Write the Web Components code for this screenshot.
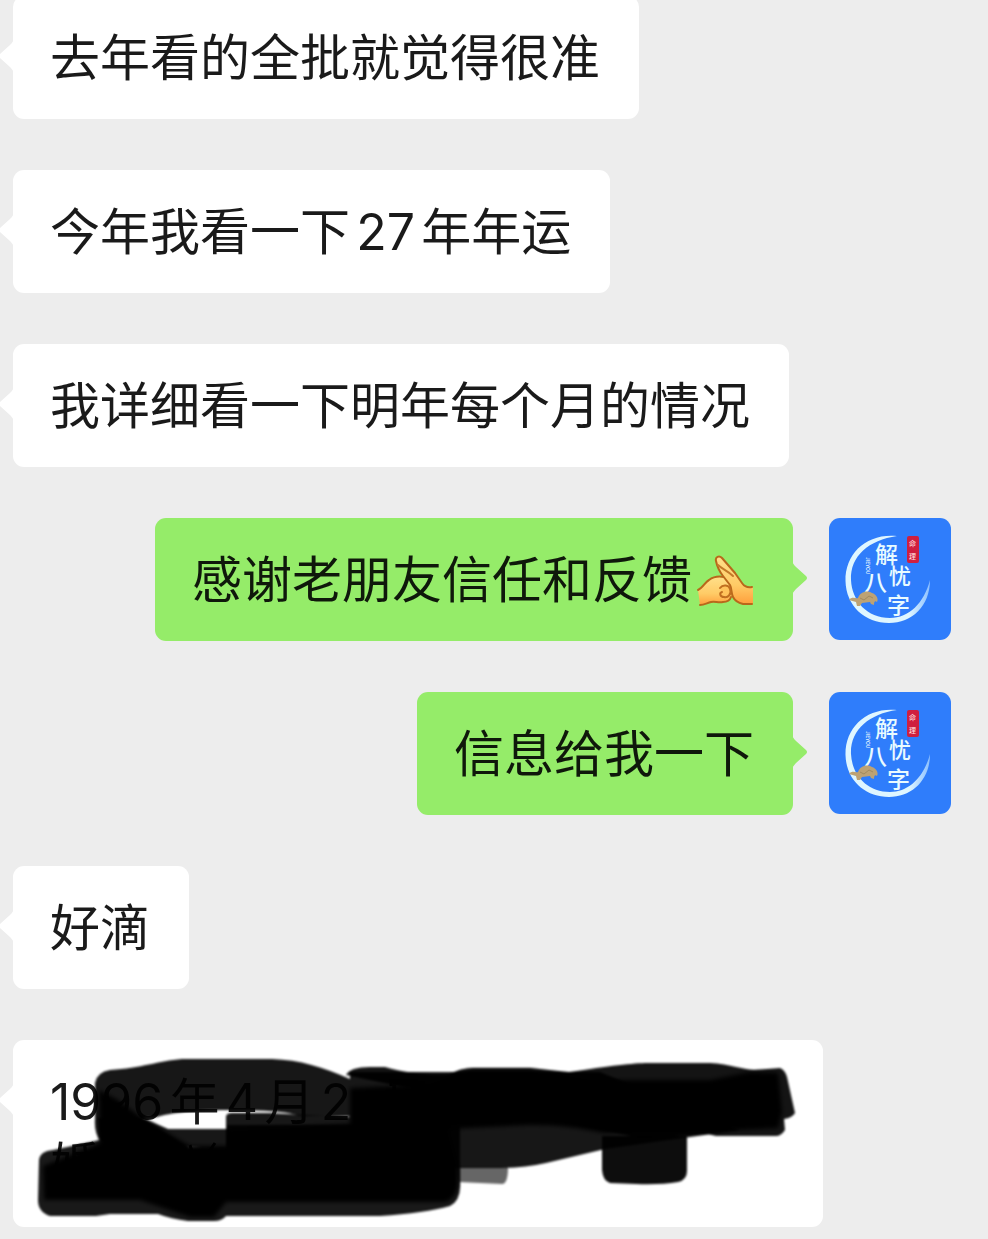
<!DOCTYPE html>
<html lang="zh-CN">
<head>
    <title>聊天记录</title>
    <meta charset="utf-8">
    <meta name="viewport" content="width=device-width, initial-scale=1">
    <style>
        body {
            margin: 0;
            background: #ededed;
            color: #1a1a1a;
            font: 50px/64px Inter, "Noto Sans CJK SC", sans-serif;
            overflow: hidden;
        }
    </style>
</head>
<body>

<template id="chat-list">
    <style>
        :host {
            display: flex;
            flex-direction: column;
            gap: 51px;
            /* scrolled a little past the first bubble */
            margin-top: -4px;
            padding: 0 37px 12px 13px;
        }
    </style>
    <slot></slot>
</template>

<template id="chat-message">
    <style>
        :host {
            --bubble: #fff;
            display: flex;
            align-items: flex-start;
            gap: 36px;
        }

        :host([mine]) {
            --bubble: #95ec69;
            justify-content: flex-end;
            color: #0f180b;
        }

        .bubble {
            position: relative;
            padding: 30px 39px 29px 37px;
            border-radius: 11px;
            background: var(--bubble);
            text-autospace: normal;
        }

        .tail {
            position: absolute;
            top: 43px;
            right: 100%;
            width: 15px;
            height: 34px;
            fill: var(--bubble);
        }

        :host([mine]) .tail {
            right: auto;
            left: 100%;
            transform: scaleX(-1);
        }
    </style>
    <div class="bubble">
        <svg class="tail" viewBox="0 0 15 34" aria-hidden="true"><path d="M16 0Q15 3 12 6L2 15Q0 17 2 19L12 28Q15 31 16 34Z"/></svg>
        <slot></slot>
    </div>
    <slot name="avatar"></slot>
</template>

<template id="chat-avatar">
    <style>
        :host {
            display: block;
            flex: none;
            width: 122px;
            height: 122px;
            border-radius: 11px;
            background: #2f7dfb;
            overflow: hidden;
        }

        svg {
            display: block;
        }

        text {
            font-family: "Noto Sans CJK SC", sans-serif;
            font-weight: 500;
            fill: #e9fbff;
        }

        .seal {
            font-size: 7px;
            fill: #ffd9d9;
        }
    </style>
    <svg width="122" height="122" viewBox="0 0 122 122" role="img" aria-label="解忧八字">
        <defs>
            <linearGradient id="brush" x1="0" y1="0" x2="1" y2="0">
                <stop offset="0" stop-color="#dff6ff"/>
                <stop offset=".75" stop-color="#dff6ff"/>
                <stop offset="1" stop-color="#8cc0ff"/>
            </linearGradient>
        </defs>
        <path fill="url(#brush)" d="M68 18C38 15 16 35 16.500 63C17 88 36 105 60 105C83 105 101 88 101 62C95 85 80 100 61 100C38 100 23 83 22 62C21 38 40 22 68 18Z"/>
        <rect x="78" y="18" width="12" height="27" rx="2" fill="#cf1f3f"/>
        <text class="seal" x="80" y="28">命</text>
        <text class="seal" x="80" y="41">理</text>
        <text x="46" y="45" font-size="23">解</text>
        <text x="60" y="66" font-size="22">忧</text>
        <text x="35" y="73" font-size="23">八</text>
        <text x="58" y="96" font-size="23">字</text>
        <text transform="translate(37 39) rotate(90)" font-size="5">JIEYOU</text>
        <path fill="#bda274" d="M20 82C23 78 27 81 29 80C31 74 38 72 43 75C47 76 50 81 48 84C46 82 45 84 45 87L42 86L41 84L33 85L31 88L28 88L27 84Z"/>
        <path fill="none" stroke="#a08a60" d="M31 80L35 82L40 78L44 80"/>
    </svg>
</template>

<template id="palms-emoji">
    <style>
        :host {
            display: inline-block;
            width: 62px;
            height: 52px;
            vertical-align: -9px;
        }

        svg {
            display: block;
        }
    </style>
    <svg width="62" height="52" viewBox="-5 -1 62 52" role="img" aria-label="双手">
        <defs>
            <linearGradient id="skin" x1="0" y1="0" x2="0" y2="1">
                <stop offset="0" stop-color="#ffe08a"/>
                <stop offset=".6" stop-color="#ffcb66"/>
                <stop offset="1" stop-color="#ff9f3c"/>
            </linearGradient>
        </defs>
        <g stroke-linecap="round" stroke-linejoin="round">
            <path fill="url(#skin)" d="M1 34C6 32 8 26 12 24C16 21 22 20 27 21L36 32L35 40C33 45 30 46 26 46C21 47 18 45 14 46C10 47 7 49 3 49Z"/>
            <path fill="none" stroke="#b9681b" stroke-width="2" d="M1 34C6 32 8 26 12 24C16 21 22 20 27 21M3 49C7 49 10 47 14 46C18 45 21 47 26 46C30 46 33 44 34 41"/>
            <path fill="url(#skin)" d="M56 31C50 32 47 30 45 27L38 17L25 2C22-1 18 1 19 5C20 10 22 15 26 20L33 29C35 33 34 37 36 41C38 45 42 47 46 48L56 48Z"/>
            <path fill="none" stroke="#b9681b" stroke-width="2" d="M55 31C50 32 47 30 45 27L38 17L25 2C22-1 18 1 19 5C20 10 22 15 26 20L33 29C35 33 34 37 36 41C38 45 42 47 46 48H55"/>
            <path fill="none" stroke="#c47a29" stroke-width="2" d="M21 9C25 13 31 15 36 20"/>
            <path fill="#ffc45c" stroke="#c06f20" stroke-width="2" d="M23 32C26 28 32 29 33 33C35 38 31 42 27 41C23 41 22 37 25 36"/>
        </g>
    </svg>
</template>

<template id="marked-out">
    <style>
        /* text and marker strokes share one grid cell */
        :host {
            display: grid;
        }

        .text,
        svg {
            grid-area: 1 / 1;
        }

        svg {
            display: block;
            overflow: visible;
        }
    </style>
    <div class="text"><slot></slot></div>
    <svg width="734" height="128" viewBox="50 1070 734 128" aria-hidden="true">
        <defs>
            <filter id="soft" x="-5%" y="-10%" width="110%" height="120%">
                <feGaussianBlur stdDeviation="1.300"/>
            </filter>
            <filter id="softer" x="-5%" y="-10%" width="110%" height="120%">
                <feGaussianBlur stdDeviation="2"/>
            </filter>
        </defs>
        <g filter="url(#soft)">
            <!-- single passes of the marker, text still shows through -->
            <path opacity=".91" d="M95 1083Q97 1072 110 1070C142 1068 158 1061 182 1059H272C300 1060 323 1067 350 1079V1116H300C285 1110 250 1110 226 1110C195 1110 170 1113 157 1117L142 1118L168 1129H230V1150L101 1141Q94 1134 95 1119Z"/>
            <path opacity=".91" d="M226 1117Q226 1113 232 1113H270Q300 1115 350 1117V1072H600L740 1130L605 1149L546 1163Q524 1168 500 1168H226Z"/>
            <path opacity=".92" d="M346 1075Q350 1067 370 1067H385C405 1073 428 1075 450 1074Q460 1068 473 1068H530L569 1072C610 1066 633 1063 648 1063H710C730 1064 745 1070 754 1070L780 1068Q785 1070 787 1077L795 1113Q792 1118 784 1119L785 1130Q781 1136 776 1136H716L708 1134L640 1138L604 1130Z"/>
            <path opacity=".9" d="M39 1160Q40 1151 53 1150L100 1140L98 1118L142 1118L157 1128L188 1148H227V1125H460V1186Q460 1201 450 1206Q425 1213 380 1216H226Q222 1221 214 1221H188Q171 1219 158 1214H110L96 1216H50Q38 1212 38 1200Z"/>
            <path opacity=".6" d="M456 1167H508Q508 1184 502 1184L458 1182Z"/>
            <path opacity=".95" d="M602 1136H687V1171Q687 1180 678 1182Q660 1185 636 1184L610 1183Q603 1181 602 1170Z"/>
        </g>
        <g filter="url(#softer)">
            <!-- overlapping passes, fully black -->
            <path d="M99 1090L118 1100L142 1118L190 1146H229V1130L350 1124V1088L430 1084L470 1070H530L590 1080H710L750 1072L778 1073L782 1112L778 1128L716 1131L604 1133C580 1128 560 1125 530 1125L448 1129L458 1168V1186Q456 1198 446 1202H226L214 1217H190L140 1200H44L43 1166L100 1143Z"/>
        </g>
        <path fill="none" stroke="#000" stroke-width="3" d="M190 1145L192 1152M215 1143L208 1153M391 1086V1081H418"/>
    </svg>
</template>

<chat-list>
    <chat-message>去年看的全批就觉得很准</chat-message>
    <chat-message>今年我看一下27年年运</chat-message>
    <chat-message>我详细看一下明年每个月的情况</chat-message>
    <chat-message mine>感谢老朋友信任和反馈<palms-emoji></palms-emoji><chat-avatar slot="avatar"></chat-avatar></chat-message>
    <chat-message mine>信息给我一下<chat-avatar slot="avatar"></chat-avatar></chat-message>
    <chat-message>好滴</chat-message>
    <chat-message><marked-out>1996年4月2&#8199;日<br>婚</marked-out></chat-message>
</chat-list>

<script>
    // every element here is its template plus slots
    const define = name => {
        customElements.define(name, class extends HTMLElement {
            constructor() {
                super()
                const template = document.getElementById(name)
                this.attachShadow({mode: 'open'}).appendChild(template.content.cloneNode(true))
            }
        })
    }

    define('chat-list')
    define('chat-message')
    define('chat-avatar')
    define('palms-emoji')
    define('marked-out')
</script>
</body>
</html>
